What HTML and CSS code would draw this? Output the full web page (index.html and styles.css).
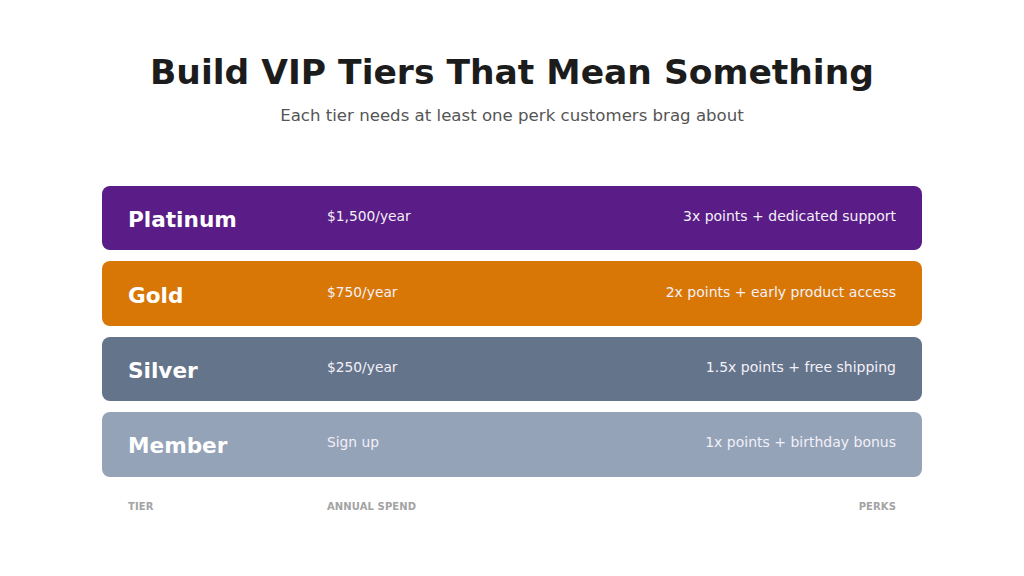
FILE: index.html
```html
<!DOCTYPE html>
<html>
<head>
<meta charset="utf-8">
<link rel="stylesheet" href="styles.css">
</head>
<body>
<div class="slide">
  <h1 class="title">Build VIP Tiers That Mean Something</h1>
  <p class="subtitle">Each tier needs at least one perk customers brag about</p>
  <div class="tiers">
    <div class="tier platinum"><span class="name">Platinum</span><span class="spend">$1,500/year</span><span class="perk">3x points + dedicated support</span></div>
    <div class="tier gold"><span class="name">Gold</span><span class="spend">$750/year</span><span class="perk">2x points + early product access</span></div>
    <div class="tier silver"><span class="name">Silver</span><span class="spend">$250/year</span><span class="perk">1.5x points + free shipping</span></div>
    <div class="tier member"><span class="name">Member</span><span class="spend">Sign up</span><span class="perk">1x points + birthday bonus</span></div>
    <div class="labels"><span>TIER</span><span>ANNUAL SPEND</span><span class="perk">PERKS</span></div>
  </div>
</div>
</body>
</html>
```

FILE: styles.css
```css
* { box-sizing: border-box; }
html, body { margin: 0; padding: 0; background: #ffffff; }
body { font-family: "DejaVu Sans", sans-serif; width: 1024px; height: 576px; overflow: hidden; }
.slide { padding-top: 51px; display: flex; flex-direction: column; align-items: center; }
.title { margin: 0; font-size: 34.5px; font-weight: 700; color: #1c1c1c; line-height: 42px; }
.subtitle { margin: 12px 0 0; font-size: 16.6px; color: #555555; line-height: 22px; }
.tiers { margin-top: 59px; width: 820px; display: flex; flex-direction: column; gap: 11px; }
.tier { height: 64.4px; border-radius: 8px; display: grid; grid-template-columns: 199px 1fr auto; align-items: center; padding: 0 26px; color: #ffffff; }
.name { font-size: 21.6px; font-weight: 700; padding-top: 3px; }
.spend, .perk { font-size: 14px; color: #f3f0f8; padding-bottom: 4px; }
.spend { font-size: 13.8px; }
.perk { text-align: right; }
.platinum { background: #5a1c86; }
.gold { background: #d97706; }
.silver { background: #64748b; }
.member { background: #94a3b8; }
.labels { display: grid; grid-template-columns: 199px 1fr auto; padding: 0 26px; margin-top: 13px; font-size: 10px; font-weight: 700; color: #a3a3a3; letter-spacing: 0.1px; }
.labels .perk { font-size: 10px; color: #a3a3a3; padding: 0; }
```
